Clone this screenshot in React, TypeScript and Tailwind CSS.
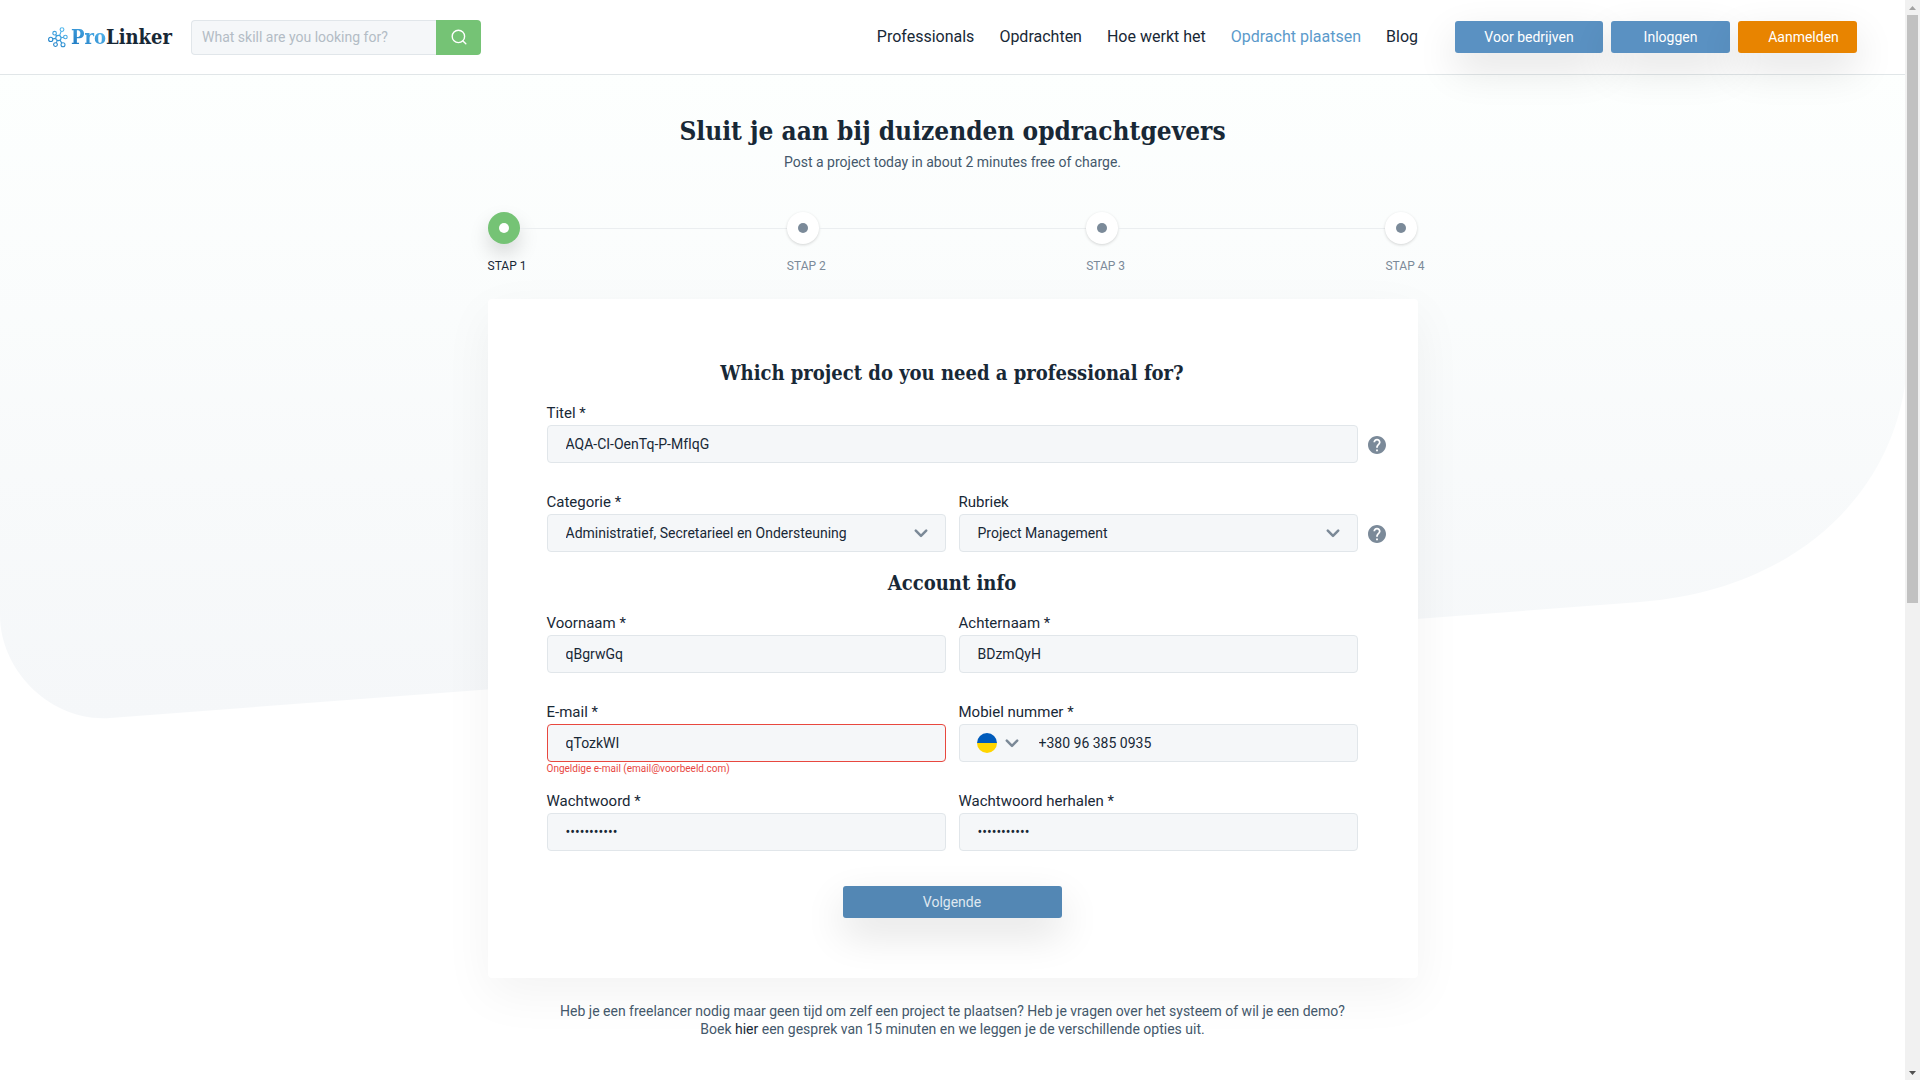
import type { ReactNode, SelectHTMLAttributes } from "react";

const slab = "font-['Roboto_Slab','DejaVu_Serif_Condensed','DejaVu_Serif',serif]";
const box =
  "h-[38px] w-full rounded border border-[#e1e6ea] bg-[#f5f7f9] text-sm text-[#182836] outline-none";

function LogoMark() {
  return (
    <svg width="20" height="21" viewBox="0 0 20 21" fill="none" stroke="url(#mark)" strokeWidth="1.1" aria-hidden="true">
      <defs>
        <linearGradient id="mark" x1="0" y1="21" x2="14" y2="0" gradientUnits="userSpaceOnUse">
          <stop offset="0" stopColor="#1673bd" />
          <stop offset="1" stopColor="#52b9ef" />
        </linearGradient>
      </defs>
      <circle cx="10.4" cy="11" r="2.6" />
      <circle cx="14" cy="2.6" r="1.9" />
      <circle cx="6.6" cy="6.2" r="1.8" />
      <circle cx="17.4" cy="10" r="1.8" />
      <circle cx="2.7" cy="12.4" r="2.1" />
      <circle cx="7.5" cy="17.6" r="1.9" />
      <circle cx="15" cy="17.8" r="2" />
      <path d="M11.5 8.6l1.7-4.2M8.7 9.1L7.6 7.7M13 10.7l2.6-.4M7.8 11.4l-3 .5M9.3 13.4l-1 2.5M12 13.1l1.8 3" />
    </svg>
  );
}

function Chevron() {
  return (
    <svg width="14" height="9" viewBox="0 0 14 9" fill="none" stroke="#7b8997" strokeWidth="2.5" strokeLinecap="round" strokeLinejoin="round" aria-hidden="true">
      <path d="M1.8 1.6L7 6.8l5.2-5.2" />
    </svg>
  );
}

function Help() {
  return (
    <button type="button" aria-label="Help" className="absolute top-[11px] left-full ml-2.5">
      <svg width="18" height="18" viewBox="2 2 20 20" fill="#7b8a99" aria-hidden="true">
        <path d="M12 2C6.48 2 2 6.48 2 12s4.48 10 10 10 10-4.48 10-10S17.52 2 12 2zm1 17h-2v-2h2v2zm2.07-7.75l-.9.92C13.45 12.9 13 13.5 13 15h-2v-.5c0-1.1.45-2.1 1.17-2.83l1.24-1.26c.37-.36.59-.86.59-1.41 0-1.1-.9-2-2-2s-2 .9-2 2H8c0-2.21 1.79-4 4-4s4 1.79 4 4c0 .88-.36 1.68-.93 2.25z" />
      </svg>
    </button>
  );
}

function Field({ id, label, error, help, children }: { id: string; label: string; error?: string; help?: boolean; children: ReactNode }) {
  return (
    <div>
      <label htmlFor={id} className="block text-[15px] leading-6">
        {label}
      </label>
      <div className="relative">
        {children}
        {help && <Help />}
      </div>
      <p className="h-[27px] text-[10px] leading-[13px] text-[#e8483f]">{error}</p>
    </div>
  );
}

function Select({ children, ...rest }: SelectHTMLAttributes<HTMLSelectElement>) {
  return (
    <div className="relative">
      <select {...rest} className={`${box} appearance-none pr-12 pl-[18px]`}>
        {children}
      </select>
      <span className="pointer-events-none absolute inset-y-0 right-[18px] flex items-center">
        <Chevron />
      </span>
    </div>
  );
}

const nav = ["Professionals", "Opdrachten", "Hoe werkt het", "Opdracht plaatsen", "Blog"];
const lift = "shadow-[0_16px_40px_rgba(0,0,0,0.12)]";

function Header() {
  return (
    <header className="relative z-10 flex h-[75px] items-center border-b border-[#e1e6e8] bg-white px-12">
      <a href="#" className="flex items-center gap-[3px]" aria-label="ProLinker">
        <LogoMark />
        <span className={`${slab} text-xl leading-7 font-bold`}>
          <span className="bg-linear-to-tr from-[#1673bd] to-[#5cc0f4] bg-clip-text text-transparent">Pro</span>
          <span>Linker</span>
        </span>
      </a>
      <form className="ml-[19px] flex h-[35px] w-[290px]">
        <input
          type="text"
          aria-label="Search"
          placeholder="What skill are you looking for?"
          className="min-w-0 flex-1 rounded-l border border-r-0 border-[#e1e6ea] bg-[#f5f7f9] px-2.5 text-sm outline-none placeholder:text-[#b3bcc5]"
        />
        <button type="button" aria-label="Search" className="flex w-[45px] items-center justify-center rounded-r bg-[#75c375]">
          <svg width="16" height="16" viewBox="0 0 16 16" fill="none" stroke="white" strokeWidth="1.4" strokeLinecap="round" aria-hidden="true">
            <circle cx="7.4" cy="7.4" r="6.2" />
            <path d="M12 12l2.8 2.8" />
          </svg>
        </button>
      </form>
      <nav className="ml-auto flex gap-[25px] text-base">
        {nav.map((n) => (
          <a key={n} href="#" className={n === "Opdracht plaatsen" ? "text-[#5b9acb]" : ""}>
            {n}
          </a>
        ))}
      </nav>
      <div className="ml-[37px] flex gap-2 text-sm text-white">
        <button className={`h-8 w-[148px] rounded-[3px] bg-[#5a91c2] ${lift}`}>Voor bedrijven</button>
        <button className={`h-8 w-[119px] rounded-[3px] bg-[#5a91c2] ${lift}`}>Inloggen</button>
        <button className={`h-8 w-[119px] rounded-[3px] bg-[#e88400] pl-3 ${lift}`}>Aanmelden</button>
      </div>
    </header>
  );
}

function Steps() {
  return (
    <ol className="mt-10 flex text-xs">
      {[1, 2, 3, 4].map((n) => (
        <li key={n} className={n < 4 ? "flex-1" : "w-8"}>
          <div className="flex items-center">
            <span
              className={
                n === 1
                  ? "flex size-8 items-center justify-center rounded-full bg-[#75c375] shadow-[0_10px_20px_rgba(0,0,0,0.15)]"
                  : "flex size-8 items-center justify-center rounded-full bg-white shadow-[0_1px_3px_rgba(0,0,0,0.16)]"
              }
            >
              <span className={n === 1 ? "size-2.5 rounded-full bg-white" : "size-2.5 rounded-full bg-[#7b8a99]"} />
            </span>
            {n < 4 && <span className="h-px flex-1 bg-[#ebeef0]" />}
          </div>
          <p className={n === 1 ? "mt-3.5 whitespace-nowrap" : "mt-3.5 whitespace-nowrap text-[#7b8a99]"}>STAP {n}</p>
        </li>
      ))}
    </ol>
  );
}

function Backdrop() {
  return (
    <svg className="absolute inset-x-0 top-0 h-[720px] w-full" viewBox="0 0 1905 720" preserveAspectRatio="none" aria-hidden="true">
      <defs>
        <linearGradient id="sky" x1="0" y1="0" x2="0" y2="1">
          <stop offset="0.1" stopColor="#fdfffe" />
          <stop offset="1" stopColor="#f5f7f9" />
        </linearGradient>
      </defs>
      <path d="M0 0H1905V385C1888 500 1790 591 1640 602L110 718C50 722 0 670 0 615Z" fill="url(#sky)" />
    </svg>
  );
}

function Scrollbar() {
  return (
    <div className="flex w-[15px] shrink-0 flex-col items-center bg-[#f1f1f1]" aria-hidden="true">
      <svg width="15" height="15" viewBox="0 0 15 15" className="shrink-0">
        <path d="M4 10l3.5-4 3.5 4z" fill="#a3a3a3" />
      </svg>
      <div className="flex w-[11px] flex-1 flex-col">
        <span className="h-[56%] bg-[#c1c1c1]" />
      </div>
      <svg width="15" height="15" viewBox="0 0 15 15" className="shrink-0">
        <path d="M4 6l3.5 4L11 6z" fill="#505050" />
      </svg>
    </div>
  );
}

export default function App() {
  return (
    <div className="flex min-h-screen bg-white font-[Roboto,sans-serif] text-[#182836]">
      <div className="relative min-w-0 flex-1">
        <Backdrop />
        <Header />
        <main className="relative mx-auto max-w-[930px]">
          <h1 className={`${slab} pt-9 text-center text-[26px] leading-10 font-bold`}>
            Sluit je aan bij duizenden opdrachtgevers
          </h1>
          <p className="mt-px text-center text-sm text-[#44586b]">Post a project today in about 2 minutes free of charge.</p>
          <Steps />
          <form className="mt-[25px] rounded bg-white pr-[60px] pl-[59px] pt-14 pb-[60px] shadow-[0_16px_50px_rgba(0,0,0,0.05)]">
            <h2 className={`${slab} text-center text-xl leading-9 font-bold`}>Which project do you need a professional for?</h2>
            <div className="mt-2.5">
              <Field id="title" label="Titel *" help>
                <input id="title" className={`${box} px-[18px]`} defaultValue="AQA-CI-OenTq-P-MfIqG" />
              </Field>
            </div>
            <div className="grid grid-cols-2 gap-x-[13px]">
              <Field id="category" label="Categorie *">
                <Select id="category">
                  <option>Administratief, Secretarieel en Ondersteuning</option>
                </Select>
              </Field>
              <Field id="rubric" label="Rubriek" help>
                <Select id="rubric">
                  <option>Project Management</option>
                </Select>
              </Field>
            </div>
            <h2 className={`${slab} -mt-3 mb-3 text-center text-xl leading-8 font-bold`}>Account info</h2>
            <div className="grid grid-cols-2 gap-x-[13px]">
              <Field id="first" label="Voornaam *">
                <input id="first" className={`${box} px-[18px]`} defaultValue="qBgrwGq" />
              </Field>
              <Field id="last" label="Achternaam *">
                <input id="last" className={`${box} px-[18px]`} defaultValue="BDzmQyH" />
              </Field>
              <Field id="email" label="E-mail *" error="Ongeldige e-mail (email@voorbeeld.com)">
                <input
                  id="email"
                  className="h-[38px] w-full rounded border border-[#e8483f] bg-[#f5f7f9] px-[18px] text-sm outline-none"
                  defaultValue="qTozkWI"
                />
              </Field>
              <Field id="phone" label="Mobiel nummer *">
                <div className={`${box} flex items-center`}>
                  <button type="button" aria-label="Country" className="ml-[17px] flex items-center gap-2">
                    <span className="size-5 rounded-full bg-linear-to-b from-[#005bbb] from-50% to-[#ffd500] to-50%" />
                    <Chevron />
                  </button>
                  <input id="phone" type="tel" className="ml-5 min-w-0 flex-1 outline-none" defaultValue="+380 96 385 0935" />
                </div>
              </Field>
              <Field id="pass" label="Wachtwoord *">
                <input id="pass" type="password" className={`${box} px-[18px]`} defaultValue="abcdefghijk" />
              </Field>
              <Field id="pass2" label="Wachtwoord herhalen *">
                <input id="pass2" type="password" className={`${box} px-[18px]`} defaultValue="abcdefghijk" />
              </Field>
            </div>
            <button type="button" className={`mx-auto mt-2 block h-8 w-[219px] rounded-[3px] bg-[#5387b4] text-sm text-[#dfe8f0] ${lift}`}>
              Volgende
            </button>
          </form>
          <p className="mt-6 text-center text-sm leading-[18px] text-[#44586b]">
            Heb je een freelancer nodig maar geen tijd om zelf een project te plaatsen? Heb je vragen over het systeem of wil je een demo?
            <br />
            Boek <a href="#" className="text-[#182836]">hier</a> een gesprek van 15 minuten en we leggen je de verschillende opties uit.
          </p>
        </main>
      </div>
      <Scrollbar />
    </div>
  );
}
